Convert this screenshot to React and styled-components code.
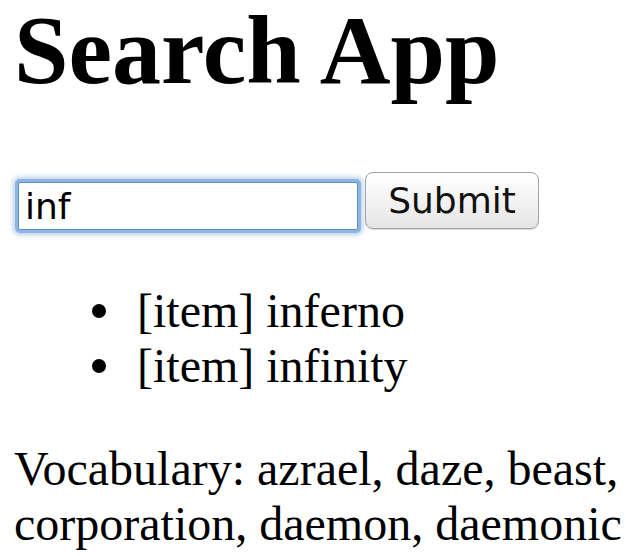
import React, { useState } from 'react';
import styled, { createGlobalStyle } from 'styled-components';

const GlobalStyle = createGlobalStyle`
    html, body {
        margin: 0;
        padding: 0;
        background: #ffffff;
    }
    body {
        font-family: "Liberation Serif", "Times New Roman", serif;
        color: #000000;
    }
`;

const vocabulary = ['azrael', 'daze', 'beast', 'corporation', 'daemon', 'daemonic'];

const App = () => {
    const [query, setQuery] = useState('inf');
    const results = ['inferno', 'infinity'];

    return (
        <Page>
            <GlobalStyle />
            <Title>Search App</Title>
            <SearchForm onSubmit={(e) => e.preventDefault()}>
                <SearchInput
                    value={query}
                    onChange={(e) => setQuery(e.target.value)}
                />
                <SubmitButton type="submit">Submit</SubmitButton>
            </SearchForm>
            <ResultList>
                {results.map((item) => (
                    <ResultItem key={item}>[item] {item}</ResultItem>
                ))}
            </ResultList>
            <Vocabulary>Vocabulary: {vocabulary.join(', ')}</Vocabulary>
        </Page>
    );
};

const Page = styled.div`
    padding: 0 0 0 14px;
    width: 626px;
    box-sizing: border-box;
`;

const Title = styled.h1`
    margin: 0;
    padding-top: 1px;
    font-size: 98px;
    line-height: 98px;
    font-weight: bold;
    white-space: nowrap;
`;

const SearchForm = styled.form`
    display: flex;
    align-items: flex-start;
    margin-top: 73px;
    gap: 7px;
`;

const SearchInput = styled.input`
    margin-top: 10px;
    margin-left: 4px;
    width: 340px;
    height: 48px;
    box-sizing: border-box;
    padding: 0 6px;
    border: 1px solid #5b8dc9;
    border-radius: 2px;
    box-shadow: 0 0 0 3px #8fb5e0, 0 0 5px 5px rgba(140, 178, 224, 0.6);
    font-family: "DejaVu Sans", "Lucida Grande", sans-serif;
    font-size: 36px;
    color: #000;
    outline: none;
`;

const SubmitButton = styled.button`
    width: 174px;
    height: 57px;
    box-sizing: border-box;
    border: 1px solid #a3a3a3;
    border-radius: 8px;
    background: linear-gradient(#ffffff, #f3f3f3 50%, #e4e4e4);
    box-shadow: 0 1px 1px rgba(0, 0, 0, 0.15);
    font-family: "DejaVu Sans", "Lucida Grande", sans-serif;
    font-size: 36px;
    color: #111;
    padding: 0;
`;

const ResultList = styled.ul`
    margin: 53px 0 0;
    padding-left: 78px;
    list-style: none;
    font-size: 48px;
    line-height: 55px;
`;

const ResultItem = styled.li`
    display: flex;
    align-items: flex-start;
    &::before {
        content: '';
        display: block;
        flex: 0 0 14px;
        width: 14px;
        height: 14px;
        margin-top: 21px;
        margin-right: 31px;
        border-radius: 50%;
        background: #000;
    }
`;

const Vocabulary = styled.p`
    margin: 48px 0 0;
    font-size: 48px;
    line-height: 55px;
    width: 620px;
`;

export default App;
